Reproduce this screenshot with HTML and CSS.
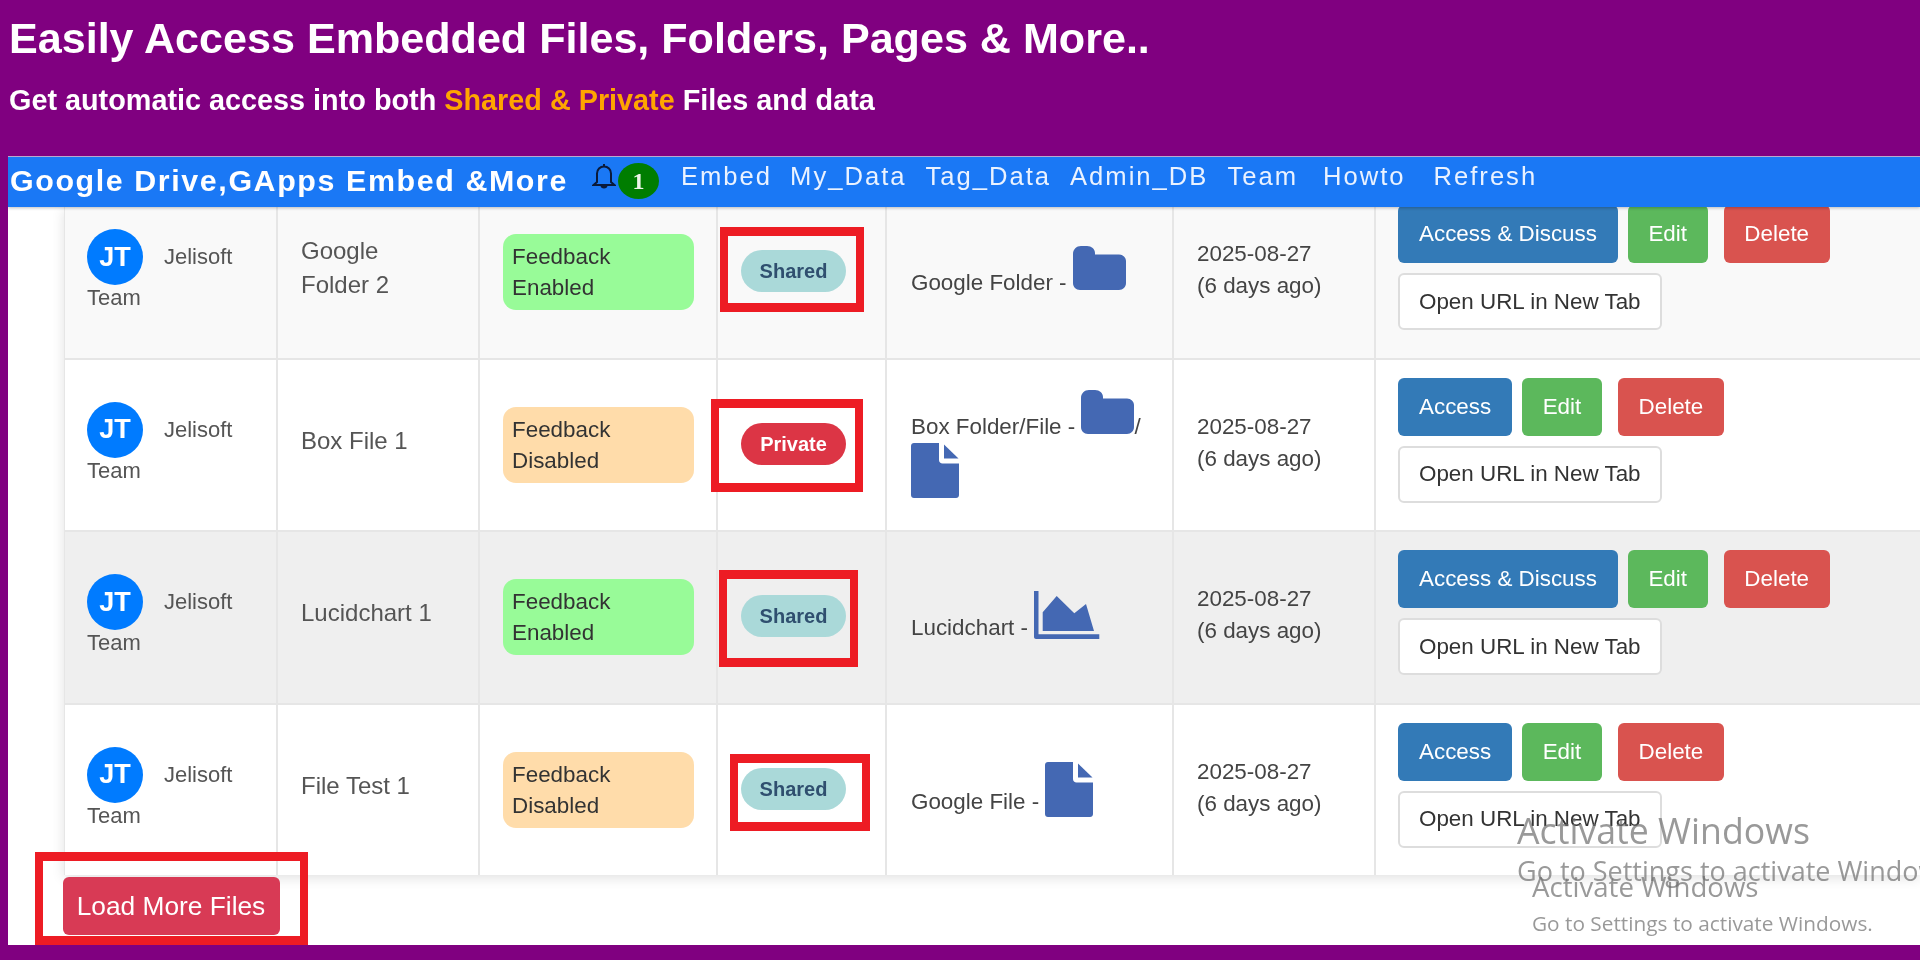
FILE: index.html
```html
<!DOCTYPE html>
<html lang="en">
<head>
<meta charset="utf-8">
<title>Easily Access Embedded Files</title>
<link rel="stylesheet" href="styles.css">
</head>
<body>
<svg class="defs" width="0" height="0" aria-hidden="true">
  <defs>
    <symbol id="i-folder" viewBox="0 0 53 44"><path d="M8 0H14C18.500 0 22 3 22 7V8.500H46C50 8.500 53 11.500 53 15V37C53 41 50 44 46 44H7C3 44 0 41 0 37V8C0 3.500 3.500 0 8 0Z"/></symbol>
    <symbol id="i-file" viewBox="0 0 48 55"><path d="M3 0H28V17C28 19 29.500 20.500 31.500 20.500H48V52C48 53.700 46.700 55 45 55H3C1.300 55 0 53.700 0 52V3C0 1.300 1.300 0 3 0Z"/><path d="M33 1.500 47.500 15.500H33Z"/></symbol>
    <symbol id="i-chart" viewBox="0 0 66 48"><path d="M0 0H4.500V43.300H65.300V48H2C.9 48 0 47.100 0 46Z"/><path d="M8.700 40V21.300L22.700 5 40.300 22.300 52 13 60 40Z"/></symbol>
  </defs>
</svg>
<div class="page">
  <header class="hero">
    <h1 class="hero-title">Easily Access Embedded Files, Folders, Pages &amp; More..</h1>
    <p class="hero-sub">Get automatic access into both <span class="hero-accent">Shared &amp; Private</span> Files and data</p>
  </header>
  <main class="panel">
    <nav class="navbar">
      <a class="brand">Google Drive,GApps Embed &amp;More</a>
      <span class="bell-wrap">
        <svg class="bell" viewBox="0 0 24 26" aria-hidden="true"><path class="bell-line" d="M12 1V3.500M5 19V10.500C5 6.500 8 3.500 12 3.500S19 6.500 19 10.500V19L22.500 22H1.500Z"/><path class="bell-clapper" d="M8.500 22.500H15.500C15.500 24.500 14 25.500 12 25.500S8.500 24.500 8.500 22.500Z"/></svg>
        <span class="bell-count">1</span>
      </span>
      <div class="nav-links">
        <a class="nav-link">Embed</a>
        <a class="nav-link">My_Data</a>
        <a class="nav-link">Tag_Data</a>
        <a class="nav-link">Admin_DB</a>
        <a class="nav-link">Team</a>
        <a class="nav-link">Howto</a>
        <a class="nav-link">Refresh</a>
      </div>
    </nav>
    <div class="table-clip">
      <table class="files">
        <colgroup>
          <col class="c-owner"><col class="c-name"><col class="c-feedback"><col class="c-status"><col class="c-file"><col class="c-date"><col class="c-actions">
        </colgroup>
        <tbody>
          <tr class="row-soft">
            <td class="owner"><span class="avatar">JT</span><span class="who">Jelisoft</span> <span class="who">Team</span></td>
            <td class="name">Google Folder 2</td>
            <td class="feedback-cell"><div class="feedback on">Feedback Enabled</div></td>
            <td class="status-cell"><span class="status shared">Shared</span></td>
            <td class="file">Google Folder - <svg class="ico ico-folder"><use href="#i-folder"/></svg></td>
            <td class="date">2025-08-27<br>(6 days ago)</td>
            <td class="actions">
              <div class="btn-row"><a class="btn btn-blue">Access &amp; Discuss</a><a class="btn btn-green">Edit</a><a class="btn btn-red">Delete</a></div>
              <a class="btn btn-white">Open URL in New Tab</a>
            </td>
          </tr>
          <tr>
            <td class="owner"><span class="avatar">JT</span><span class="who">Jelisoft</span> <span class="who">Team</span></td>
            <td class="name">Box File 1</td>
            <td class="feedback-cell"><div class="feedback off">Feedback Disabled</div></td>
            <td class="status-cell"><span class="status private">Private</span></td>
            <td class="file">Box Folder/File - <svg class="ico ico-folder"><use href="#i-folder"/></svg>/ <svg class="ico ico-file"><use href="#i-file"/></svg></td>
            <td class="date">2025-08-27<br>(6 days ago)</td>
            <td class="actions">
              <div class="btn-row"><a class="btn btn-blue">Access</a><a class="btn btn-green">Edit</a><a class="btn btn-red">Delete</a></div>
              <a class="btn btn-white">Open URL in New Tab</a>
            </td>
          </tr>
          <tr class="row-strong">
            <td class="owner"><span class="avatar">JT</span><span class="who">Jelisoft</span> <span class="who">Team</span></td>
            <td class="name">Lucidchart 1</td>
            <td class="feedback-cell"><div class="feedback on">Feedback Enabled</div></td>
            <td class="status-cell"><span class="status shared">Shared</span></td>
            <td class="file">Lucidchart - <svg class="ico ico-chart"><use href="#i-chart"/></svg></td>
            <td class="date">2025-08-27<br>(6 days ago)</td>
            <td class="actions">
              <div class="btn-row"><a class="btn btn-blue">Access &amp; Discuss</a><a class="btn btn-green">Edit</a><a class="btn btn-red">Delete</a></div>
              <a class="btn btn-white">Open URL in New Tab</a>
            </td>
          </tr>
          <tr>
            <td class="owner"><span class="avatar">JT</span><span class="who">Jelisoft</span> <span class="who">Team</span></td>
            <td class="name">File Test 1</td>
            <td class="feedback-cell"><div class="feedback off">Feedback Disabled</div></td>
            <td class="status-cell"><span class="status shared">Shared</span></td>
            <td class="file">Google File - <svg class="ico ico-file"><use href="#i-file"/></svg></td>
            <td class="date">2025-08-27<br>(6 days ago)</td>
            <td class="actions">
              <div class="btn-row"><a class="btn btn-blue">Access</a><a class="btn btn-green">Edit</a><a class="btn btn-red">Delete</a></div>
              <a class="btn btn-white">Open URL in New Tab</a>
            </td>
          </tr>
        </tbody>
      </table>
    </div>
    <a class="load-more">Load More Files</a>
  </main>

  <div class="mark mark-1"></div>
  <div class="mark mark-2"></div>
  <div class="mark mark-3"></div>
  <div class="mark mark-4"></div>
  <div class="mark mark-5"></div>

  <div class="wm wm-a"><div class="wm-big">Activate Windows</div><div class="wm-small">Go to Settings to activate Windows.</div></div>
  <div class="wm wm-b"><div class="wm-big">Activate Windows</div><div class="wm-small">Go to Settings to activate Windows.</div></div>
</div>
</body>
</html>
```
FILE: styles.css
```css
* { box-sizing: border-box; }
html, body { margin: 0; height: 100%; overflow: hidden; background: #800080; }
body { font-family: "Liberation Sans", Arial, sans-serif; }
.defs { position: absolute; }

.page {
  position: relative;
  width: 1920px;
  height: 960px;
  overflow: hidden;
  background: #800080;
  filter: blur(.45px);
}

/* hero */
.hero { height: 156px; padding: 14px 0 0 9px; color: #fff; }
.hero-title { margin: 0; font-size: 43.1px; line-height: 48px; font-weight: 700; }
.hero-sub { margin: 20px 0 0; font-size: 28.8px; line-height: 36px; font-weight: 700; }
.hero-accent { color: #ffa500; }

/* panel */
.panel {
  display: flex;
  flex-direction: column;
  align-items: flex-start;
  height: 789px;
  margin-left: 8px;
  background: #fff;
  overflow: hidden;
}

/* navbar */
.navbar {
  position: relative;
  z-index: 2;
  display: flex;
  align-items: flex-start;
  flex: none;
  width: 100%;
  height: 51px;
  background: #1a78f5;
  border-top: 1px solid #b9a9cf;
  box-shadow: 0 1px 3px rgba(0, 0, 0, .25);
  color: #fff;
}
.brand { margin: 5px 0 0 2px; font-size: 30.4px; line-height: 36px; font-weight: 700; letter-spacing: 1.6px; white-space: nowrap; }
.bell-wrap { display: flex; align-items: flex-start; margin: 6px 0 0 24px; }
.bell { width: 24px; height: 26px; }
.bell-line { fill: none; stroke: #0a1a3a; stroke-width: 2; }
.bell-clapper { fill: #0a1a3a; }
.bell-count {
  display: flex; align-items: center; justify-content: center;
  width: 41px; height: 36px; margin-left: 2px; border-radius: 50%;
  background: #007d00; color: #eef5e8;
  font-family: "Liberation Serif", serif; font-size: 24px; font-weight: 700;
}
.nav-links { display: flex; margin: 3px 0 0 22px; }
.nav-link { margin-right: 18px; font-size: 25.6px; line-height: 32px; letter-spacing: 2px; color: #eaf2ff; white-space: nowrap; }
.nav-link:nth-child(2) { margin-right: 19px; }
.nav-link:nth-child(3) { margin-right: 19px; }
.nav-link:nth-child(4) { margin-right: 19px; }
.nav-link:nth-child(5) { margin-right: 25px; }
.nav-link:nth-child(6) { margin-right: 28px; }

/* table */
.table-clip {
  flex: none;
  width: calc(100% - 56px);
  height: 668px;
  margin-left: 56px;
  overflow: hidden;
  box-shadow: 0 3px 12px rgba(0, 0, 0, .12);
}
.files {
  table-layout: fixed;
  border-collapse: collapse;
  width: 1910px;
  margin: -22px 0 0 -1px;
  color: #555;
  font-size: 22.4px;
  line-height: 32px;
}
.c-owner { width: 213px; }
.c-name { width: 202px; }
.c-feedback { width: 238px; }
.c-status { width: 169px; }
.c-file { width: 287px; }
.c-date { width: 202px; }
.c-actions { width: 599px; }

.files td {
  height: 172.5px;
  padding: 19px 22px 19px 23px;
  border: 2px solid #e6e6e6;
  vertical-align: middle;
}
.row-soft td { background: #f9f9f9; }
.row-strong td { background: #efefef; }

.files .owner { padding-left: 22px; padding-bottom: 24px; font-size: 22px; line-height: 25px; color: #555; }
.avatar {
  display: inline-flex; align-items: center; justify-content: center;
  width: 56px; height: 56px; margin-right: 21px; border-radius: 50%;
  background: #007bff; color: #fff;
  font-size: 27px; font-weight: 700; vertical-align: -1.5px;
}
.files .name { padding-right: 40px; font-size: 24px; line-height: 34px; padding-bottom: 27px; color: #555; }
.feedback { height: 76px; padding: 7px 8px 7px 9px; border-radius: 13px; color: #333; line-height: 31px; }
.feedback.on { background: #98fb98; }
.feedback.off { background: #ffdcaa; }

.files .status-cell { padding-bottom: 21px; }
.status {
  display: inline-flex; align-items: center; justify-content: center;
  width: 105px; height: 42px; border-radius: 21px;
  font-size: 20px; font-weight: 700; vertical-align: middle;
}
.status.shared { background: #aad9d9; color: #2f4f6f; }
.status.private { background: #dc3545; color: #fff; }

.files .file { padding-left: 24px; color: #444; }
.ico { fill: #4468b3; }
.ico-folder { width: 53px; height: 44px; vertical-align: 0; }
.ico-file { width: 48px; height: 55px; vertical-align: -8px; }
.ico-chart { width: 66px; height: 48px; vertical-align: -4px; }

.files .date { color: #444; padding-bottom: 23px; }

.files .actions { vertical-align: top; padding-top: 18px; padding-left: 22px; }
.btn-row { display: flex; gap: 10px; margin-bottom: 10px; }
.btn {
  display: inline-flex; align-items: center; justify-content: center;
  height: 58px; padding: 0 20.800px; border-radius: 6px;
  font-size: 22.4px; color: #fff; white-space: nowrap;
}
.btn-blue { background: #337ab7; padding: 0 21px; }
.btn-green { background: #5cb85c; margin-right: 6px; padding: 0 20.500px; }
.btn-red { background: #d9534f; }
.btn-white { background: #fff; color: #333; border: 2px solid #ddd; height: 57px; padding: 0 19px; }

.load-more {
  display: flex; align-items: center; justify-content: center;
  flex: none;
  width: 217px; height: 58px; margin: 2px 0 0 54.500px;
  border-radius: 6px; background: #d83a55; color: #fff; font-size: 26.300px;
}

/* annotation rectangles */
.mark { position: absolute; z-index: 3; border: solid #ed1c24; border-width: 9px 8px; }
.mark-1 { left: 720px; top: 227px; width: 144px; height: 85px; }
.mark-2 { left: 711px; top: 399px; width: 152px; height: 93px; }
.mark-3 { left: 719px; top: 570px; width: 139px; height: 97px; }
.mark-4 { left: 730px; top: 754px; width: 140px; height: 77px; }
.mark-5 { left: 35px; top: 852px; width: 273px; height: 93px; }

/* activation watermark */
.wm { position: absolute; z-index: 4; font-family: "Open Sans", sans-serif; white-space: nowrap; color: rgba(110, 110, 110, .7); }
.wm-a { left: 1517px; top: 806px; }
.wm-a .wm-big { font-size: 35.700px; line-height: 48px; }
.wm-a .wm-small { font-size: 27px; line-height: 34px; }
.wm-b { left: 1532px; top: 868px; }
.wm-b .wm-big { font-size: 27.600px; line-height: 36px; }
.wm-b .wm-small { font-size: 20.800px; line-height: 28px; margin-top: 5px; }
```
